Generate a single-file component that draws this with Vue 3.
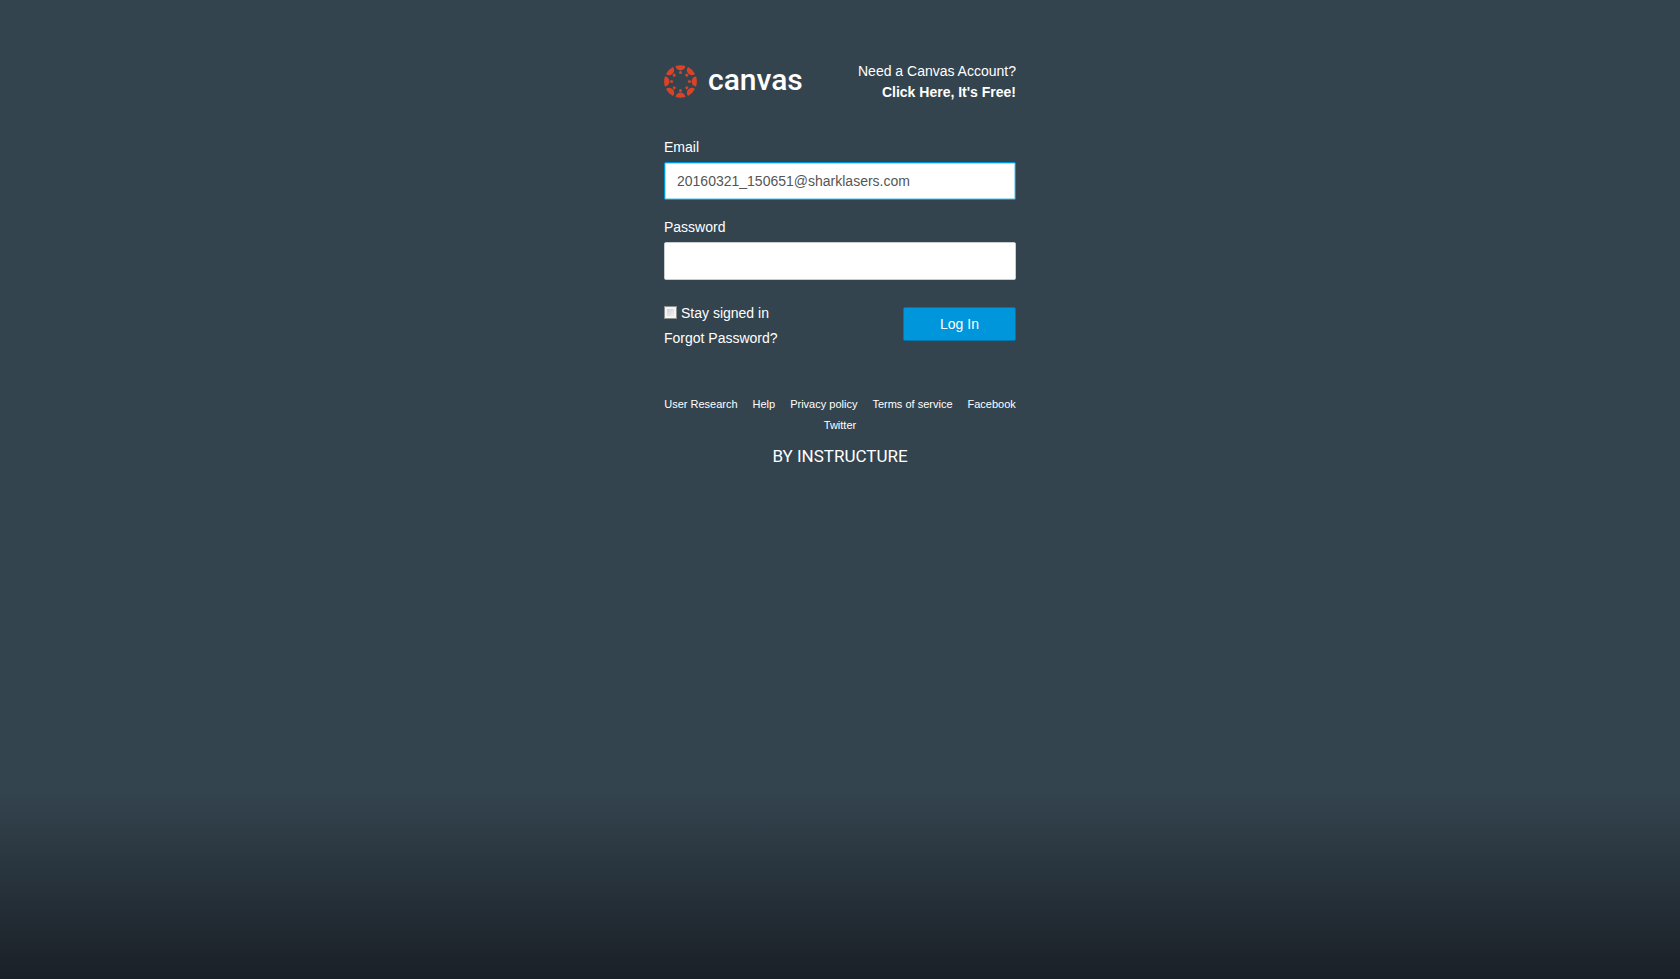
<script setup>
import { ref } from 'vue'

const email = ref('20160321_150651@sharklasers.com')
const password = ref('')
const stay = ref(false)
const links = ['User Research', 'Help', 'Privacy policy', 'Terms of service', 'Facebook', 'Twitter']
const spokes = [0, 45, 90, 135, 180, 225, 270, 315]
</script>

<template>
  <main class="page">
    <div class="login">
      <header class="head">
        <a class="brand" href="#">
          <svg class="wheel" viewBox="0 0 66 66" aria-hidden="true">
            <g v-for="a in spokes" :key="a" :transform="`rotate(${a} 33 33)`">
              <path d="M23.2 1.8 A32.6 32.6 0 0 1 42.8 1.8 A9.8 9 0 0 1 23.2 1.8Z" />
              <circle cx="33" cy="15.2" r="3" />
            </g>
          </svg>
          <span class="name">canvas</span>
        </a>
        <a class="signup" href="#">Need a Canvas Account?<strong>Click Here, It's Free!</strong></a>
      </header>

      <form class="form" @submit.prevent>
        <div class="field">
          <label for="email">Email</label>
          <input id="email" v-model="email" class="text active" type="text">
        </div>
        <div class="field">
          <label for="password">Password</label>
          <input id="password" v-model="password" class="text" type="password">
        </div>
        <div class="actions">
          <div class="options">
            <label class="stay" for="stay"><input id="stay" v-model="stay" type="checkbox">Stay signed in</label>
            <a href="#">Forgot Password?</a>
          </div>
          <button class="submit" type="submit">Log In</button>
        </div>
      </form>

      <footer class="foot">
        <nav class="links">
          <a v-for="l in links" :key="l" href="#">{{ l }}</a>
        </nav>
        <a class="by" href="#">BY INSTRUCTURE</a>
      </footer>
    </div>
  </main>
</template>

<style>
body {
  margin: 0;
  background: #34444f;
}
</style>

<style scoped>
* {
  box-sizing: border-box;
}
.page {
  min-height: 100vh;
  padding: 61px 16px 24px;
  background: linear-gradient(to top, #1a2027 0, #34444f 190px);
  color: #fff;
  font: 14px/21px "Liberation Sans", Arial, sans-serif;
}
a {
  color: inherit;
  text-decoration: none;
}
.login {
  max-width: 352px;
  margin: 0 auto;
}
.head {
  display: flex;
  justify-content: space-between;
  align-items: center;
}
.brand {
  display: flex;
  align-items: center;
  gap: 11px;
  padding-bottom: 2px;
}
.wheel {
  width: 33px;
  height: 33px;
  fill: #dc4226;
}
.name {
  font: 500 30px/36px Roboto, sans-serif;
  padding-bottom: 2px;
}
.signup {
  text-align: right;
}
.signup strong {
  display: block;
}
.form {
  margin-top: 34px;
}
.field {
  display: flex;
  flex-direction: column;
  gap: 4px;
  margin-bottom: 17px;
}
.text {
  width: 100%;
  height: 38px;
  padding: 0 12px;
  border: 1px solid #c7cdd1;
  border-radius: 2px;
  background: #fff;
  color: #555;
  font: inherit;
  outline: none;
}
.text.active {
  border-color: #0096db;
  box-shadow: inset 0 0 0 1px #a6def6;
}
.actions {
  display: flex;
  justify-content: space-between;
  align-items: flex-start;
  margin-top: 23px;
}
.options {
  display: flex;
  flex-direction: column;
  align-items: flex-start;
  gap: 4px;
}
.stay {
  display: flex;
  align-items: flex-start;
  gap: 4px;
}
.stay input {
  appearance: none;
  width: 13px;
  height: 13px;
  margin: 3px 0 0;
  border: 1px solid #8e8f8f;
  background: linear-gradient(135deg, #c5cad3, #f6f6f6);
  box-shadow: inset 0 0 0 2px #f4f4f4;
}
.stay input:checked {
  background: #0096db;
}
.submit {
  width: 113px;
  height: 34px;
  margin-top: 4px;
  padding: 0;
  border: 1px solid #0076ad;
  border-radius: 2px;
  background: #0096db;
  color: #fff;
  font: inherit;
}
.foot {
  display: flex;
  flex-direction: column;
  align-items: center;
  gap: 10px;
  margin-top: 45px;
}
.links {
  display: flex;
  flex-wrap: wrap;
  justify-content: center;
  column-gap: 15px;
  font-size: 11px;
}
.by {
  font: 400 17px/21px Roboto, sans-serif;
}
</style>
